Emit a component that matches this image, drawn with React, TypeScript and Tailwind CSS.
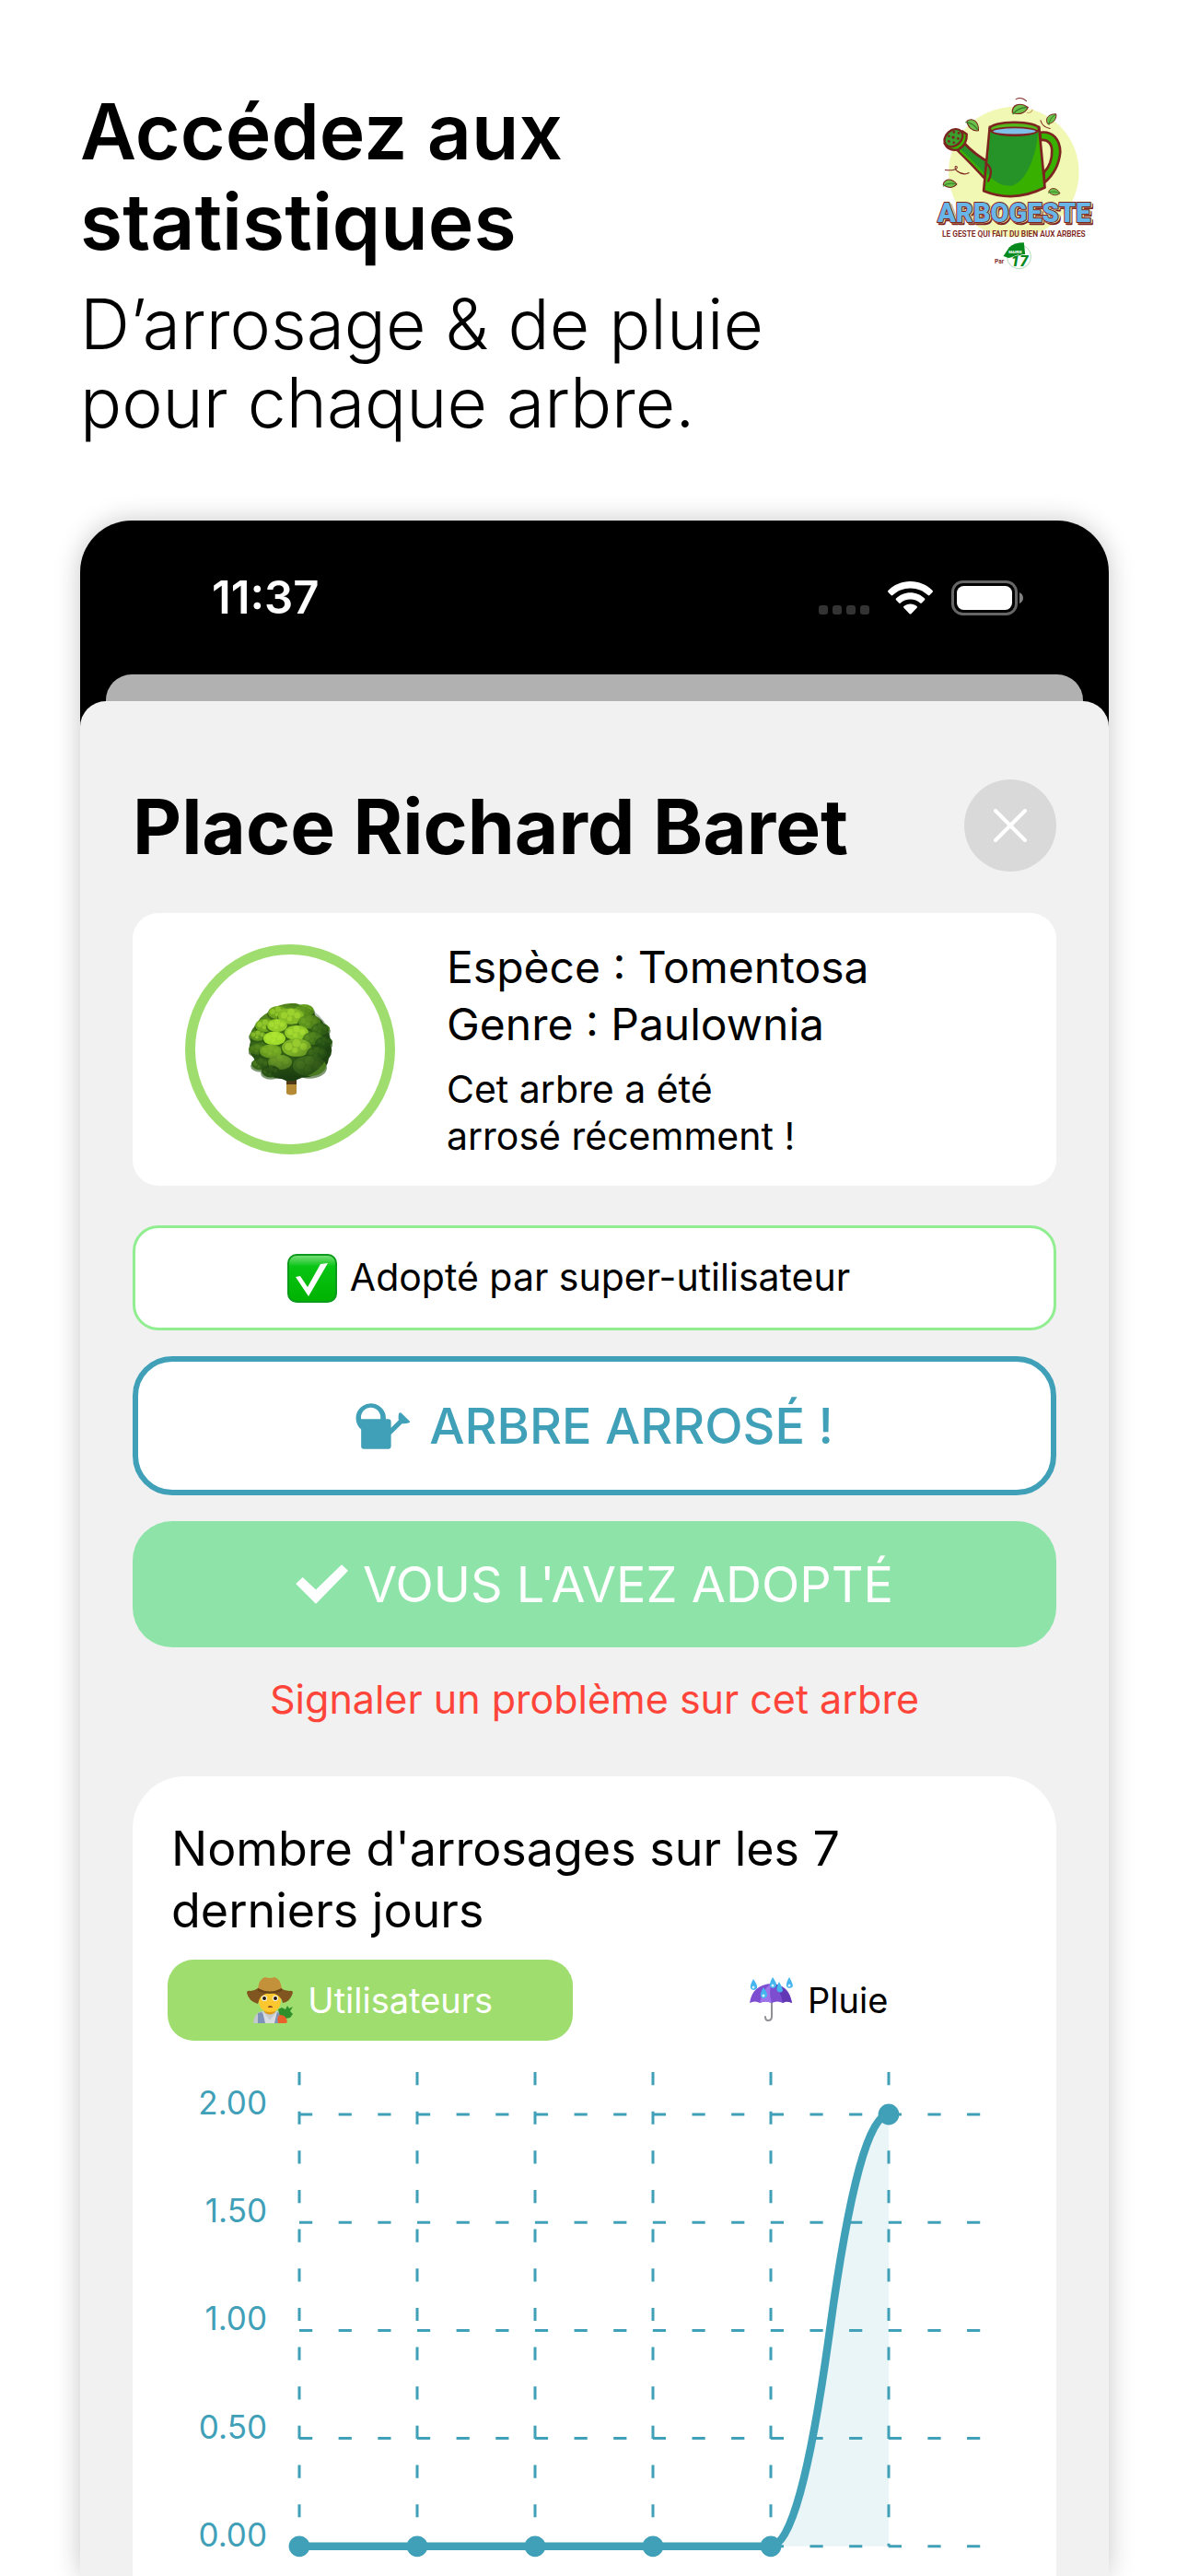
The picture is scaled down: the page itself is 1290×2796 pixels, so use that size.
import { useState } from "react";
import type { ReactNode } from "react";

const yLabels = ["2.00", "1.50", "1.00", "0.50", "0.00"];
const waterings = [0, 0, 0, 0, 0, 2];

const LEAVES = [
  { x: 382, y: 104, r: -8, s: 1.15 },
  { x: 484, y: 136, r: -40, s: 0.9 },
  { x: 232, y: 157, r: 50, s: 1.05 },
  { x: 155, y: 347, r: 8, s: 0.95 },
  { x: 495, y: 374, r: 18, s: 0.8 },
];

function Logo() {
  return (
    <svg
      viewBox="100 60 530 575"
      className="mt-[9px] mr-[14px] h-[192px] w-[177px] shrink-0"
      role="img"
      aria-label="Arbogeste"
    >
      <circle cx="363" cy="311" r="212" fill="#f1f8b4" />
      {LEAVES.map((l, i) => (
        <g
          key={i}
          transform={`translate(${l.x} ${l.y}) rotate(${l.r}) scale(${l.s})`}
          stroke="#7d2420"
          strokeWidth="3"
        >
          <path
            d="M-22 8C-20-12 2-20 24 0C12 18-8 18-22 8Z"
            fill="#6cc04a"
          />
          <path d="M-22 14C-10 2 4-2 20 0" fill="none" stroke="#2f7d28" />
        </g>
      ))}
      <g fill="none" stroke="#7d2420" strokeWidth="3" strokeLinecap="round">
        <path d="M370 74Q388 65 404 80" />
        <path d="M406 118Q420 120 424 108" stroke="#c9a860" />
        <path d="M450 143Q456 166 481 169" />
        <path d="M140 304C160 306 184 303 178 293C172 288 168 300 178 307C190 316 206 320 217 313" />
      </g>
      {/* handle */}
      <path
        d="M448 182C492 176 514 208 514 246C510 290 490 322 462 346L461 312C480 292 488 268 487 240C486 218 474 204 450 207Z"
        fill="#37b000"
        stroke="#7d2420"
        strokeWidth="8"
      />
      {/* spout */}
      <path
        d="M178 238L203 218Q236 254 285 281Q296 310 278 342Q224 282 178 238Z"
        fill="#269328"
        stroke="#7d2420"
        strokeWidth="8"
        strokeLinejoin="round"
      />
      <path
        d="M188 240Q232 280 275 328"
        fill="none"
        stroke="#37b000"
        strokeWidth="7"
      />
      {/* body */}
      <path
        d="M285 164L265 372Q364 412 464 361L445 164Z"
        fill="#37b000"
        stroke="#7d2420"
        strokeWidth="8"
        strokeLinejoin="round"
      />
      <path
        d="M288 170L276 316Q310 356 350 356C404 350 440 250 442 170Z"
        fill="#269328"
      />
      <path
        d="M272 282Q300 300 280 340"
        fill="none"
        stroke="#7d2420"
        strokeWidth="7"
        strokeLinecap="round"
      />
      <ellipse
        cx="365"
        cy="170"
        rx="80"
        ry="21"
        fill="#55b81c"
        stroke="#7d2420"
        strokeWidth="8"
      />
      <ellipse
        cx="365"
        cy="178"
        rx="72"
        ry="12"
        fill="#7fc0ea"
        stroke="#7d2420"
        strokeWidth="5"
      />
      {/* rose */}
      <path
        d="M138 218Q150 244 182 238Q212 222 210 188L196 178Z"
        fill="#37b000"
        stroke="#7d2420"
        strokeWidth="7"
      />
      <ellipse
        cx="167"
        cy="200"
        rx="33"
        ry="25"
        transform="rotate(-42 167 200)"
        fill="#3a9f2c"
        stroke="#7d2420"
        strokeWidth="7"
      />
      <g fill="#7d2420">
        <circle cx="166" cy="198" r="5" />
        <circle cx="152" cy="194" r="4" />
        <circle cx="168" cy="181" r="4" />
        <circle cx="184" cy="184" r="4" />
        <circle cx="182" cy="202" r="4" />
        <circle cx="168" cy="215" r="4" />
        <circle cx="152" cy="211" r="4" />
      </g>
      <g fontFamily="Roboto, sans-serif" textAnchor="middle">
        <g fontSize="87" fontWeight="900" strokeLinejoin="round">
          <text x="370" y="478" fill="#7d2420" stroke="#7d2420" strokeWidth="7">
            ARBOGESTE
          </text>
          <text
            x="366"
            y="474"
            fill="#68b5e8"
            stroke="#f1f8b4"
            strokeWidth="8"
            aria-hidden="true"
          >
            ARBOGESTE
          </text>
          <text
            x="364"
            y="472"
            fill="#68b5e8"
            stroke="#7d2420"
            strokeWidth="6"
            paintOrder="stroke"
            aria-hidden="true"
          >
            ARBOGESTE
          </text>
        </g>
        <text
          x="363"
          y="522"
          fontSize="25"
          fontWeight="600"
          fontFamily="'Liberation Sans Narrow', Roboto, sans-serif"
          fill="#7d2420"
        >
          LE GESTE QUI FAIT DU BIEN AUX ARBRES
        </text>
        <text x="316" y="608" fontSize="20" fontWeight="600" fill="#7d2420">
          Par
        </text>
        <circle
          cx="380"
          cy="586"
          r="39"
          fill="#fff"
          stroke="#8cc79a"
          strokeWidth="2"
        />
        <path d="M329 584L348 556Q364 540 396 540L400 578L346 590Z" fill="#078a1d" />
        <text x="368" y="574" fontSize="13" fontWeight="800" fill="#fff">
          MAIRIE
        </text>
        <text
          x="382"
          y="616"
          fontSize="50"
          fontWeight="900"
          fontStyle="italic"
          fill="#078a1d"
          stroke="#fff"
          strokeWidth="3"
          paintOrder="stroke"
        >
          17
        </text>
      </g>
    </svg>
  );
}

function StatusBar() {
  return (
    <div className="flex items-center justify-between pt-14 pr-[93px] pb-14 pl-[143px]">
      <span className="text-[49px] leading-[55px] font-semibold text-white">
        11:37
      </span>
      <div className="flex items-center gap-5">
        <div className="flex gap-[5px] pt-[26px]">
          <i className="size-[10px] rounded-[3px] bg-[#333]" />
          <i className="size-[10px] rounded-[3px] bg-[#333]" />
          <i className="size-[10px] rounded-[3px] bg-[#333]" />
          <i className="size-[10px] rounded-[3px] bg-[#333]" />
        </div>
        <svg viewBox="0 0 49 36" className="h-9 w-[49px]" fill="#fff">
          <path d="M24.500 0C34 0 42.500 3.800 48.600 10C49.100 10.500 49.100 11.200 48.600 11.700L45.400 15C44.900 15.500 44.200 15.500 43.700 15C38.700 10.200 32 7.400 24.500 7.400C17 7.400 10.300 10.200 5.300 15C4.800 15.500 4.100 15.500 3.600 15L.4 11.700C-.1 11.200-.1 10.500.4 10C6.500 3.800 15 0 24.500 0Z" />
          <path d="M24.500 12.300C30.600 12.300 36 14.700 40 18.600C40.500 19.100 40.500 19.800 40 20.300L36.800 23.600C36.300 24.100 35.600 24.100 35.100 23.600C32.300 21.100 28.600 19.600 24.500 19.600C20.400 19.600 16.700 21.100 13.900 23.600C13.400 24.100 12.700 24.100 12.200 23.600L9 20.300C8.500 19.800 8.500 19.100 9 18.600C13 14.700 18.400 12.300 24.500 12.300Z" />
          <path d="M24.500 24.400C27.200 24.400 29.700 25.400 31.600 27.100C32.100 27.600 32.100 28.300 31.600 28.800L25.400 35.200C24.900 35.700 24.100 35.700 23.600 35.200L17.400 28.800C16.900 28.300 16.900 27.600 17.400 27.100C19.300 25.400 21.800 24.400 24.500 24.400Z" />
        </svg>
        <svg viewBox="0 0 78 38" className="h-[38px] w-[78px]">
          <rect
            x="1.500"
            y="1.500"
            width="69"
            height="35"
            rx="11"
            fill="none"
            stroke="#666"
            strokeWidth="3"
          />
          <rect x="6" y="6" width="60" height="26" rx="7.500" fill="#fff" />
          <path d="M74 13Q78 15 78 19T74 25Z" fill="#808080" />
        </svg>
      </div>
    </div>
  );
}

// x, y, radius, colour of each clump of leaves, back to front
const TREE_LUMPS = [
  [32, 10, 12, "#6fa51f"],
  [60, 8, 12, "#5f9a1c"],
  [46, 14, 15, "#86bd26"],
  [18, 24, 12, "#6fa81f"],
  [66, 20, 13, "#5c931d"],
  [78, 28, 11, "#3f741a"],
  [31, 24, 12, "#93cc29"],
  [10, 35, 10, "#5f971e"],
  [52, 32, 14, "#8fc829"],
  [28, 38, 13, "#a0dc2b"],
  [70, 38, 12, "#4c831d"],
  [82, 42, 10, "#2d6018"],
  [9, 50, 10, "#4a7d1b"],
  [24, 52, 13, "#6fa322"],
  [52, 48, 17, "#7db126"],
  [74, 54, 12, "#37691a"],
  [13, 66, 11, "#39671a"],
  [34, 64, 14, "#6a9a27"],
  [66, 68, 19, "#4a7a22"],
  [24, 74, 11, "#2a5415"],
] as const;

function TreeIcon() {
  return (
    <svg viewBox="0 0 91 100" className="h-[100px] w-[91px]">
      <defs>
        <radialGradient id="tree" cx="0.4" cy="0.25" r="0.8">
          <stop offset="0" stopColor="#6ea01f" />
          <stop offset="0.600" stopColor="#35651a" />
          <stop offset="1" stopColor="#17380f" />
        </radialGradient>
        <radialGradient id="shade" cx="0.38" cy="0.35" r="0.65">
          <stop offset="0.500" stopColor="#17380f" stopOpacity="0" />
          <stop offset="1" stopColor="#17380f" stopOpacity="0.600" />
        </radialGradient>
      </defs>
      <path d="M41 78H52V98Q46 101 41 98Z" fill="#b58a35" />
      <path d="M41 78H52V88H41Z" fill="#4d3916" />
      <path
        d="M46 0Q54-1 60 5Q70 7 73 14Q82 18 83 27Q90 35 88 43Q93 52 87 60Q86 70 76 74Q68 82 58 80Q46 88 36 82Q24 82 18 74Q7 70 6 60Q-2 52 2 42Q0 30 8 24Q12 14 21 10Q32 0 46 0Z"
        fill="url(#tree)"
      />
      {TREE_LUMPS.map(([x, y, r, color], i) => (
        <g key={i}>
          <ellipse cx={x} cy={y + 2} rx={r} ry={r * 0.62} fill="#2a5413" opacity="0.6" />
          <ellipse cx={x} cy={y} rx={r - 1} ry={r * 0.58} fill={color} />
          <g fill="#c0f03c" opacity={y < 50 && x < 60 ? 0.4 : 0.13}>
            <circle cx={x - r * 0.5} cy={y - 1} r={r * 0.24} />
            <circle cx={x} cy={y - r * 0.28} r={r * 0.26} />
            <circle cx={x + r * 0.45} cy={y - 1} r={r * 0.22} />
            <circle cx={x - r * 0.1} cy={y + r * 0.18} r={r * 0.18} />
          </g>
        </g>
      ))}
      <ellipse cx="45" cy="42" rx="44" ry="41" fill="url(#shade)" />
    </svg>
  );
}

function CheckBadge() {
  return (
    <svg viewBox="0 0 54 53" className="h-[53px] w-[54px]">
      <defs>
        <linearGradient id="badge" x1="0" y1="0" x2="0" y2="1">
          <stop offset="0" stopColor="#7fe07f" />
          <stop offset="0.250" stopColor="#08c414" />
          <stop offset="1" stopColor="#00b200" />
        </linearGradient>
      </defs>
      <rect
        x="1"
        y="1"
        width="52"
        height="51"
        rx="9"
        fill="url(#badge)"
        stroke="#0a9a1c"
        strokeWidth="2"
      />
      <path d="M9 25L14 24L22 36L36 11L44 10L23 46Z" fill="#fff" />
    </svg>
  );
}

function WateringCanIcon() {
  return (
    <svg viewBox="442 552 180 154" className="h-[51px] w-[60px]" fill="currentColor">
      <path d="M460 641C449 632 443 618 443 603A49 49 0 0 1 541 607H549Q558 607 558 616V636L583 611Q581 598 584 588Q587 584 591 587L618 613Q622 617 617 619Q606 623 594 622L558 658V696Q558 705 549 705H469Q460 705 460 696ZM460 607H523A32 32 0 1 0 460 607Z" />
    </svg>
  );
}

function CheckIcon() {
  return (
    <svg viewBox="235 1075 174 132" className="h-[43px] w-[57px]">
      <path
        d="M258 1121L302 1163L388 1079L406 1096L302 1203L239 1140Z"
        fill="currentColor"
        stroke="currentColor"
        strokeWidth="5"
        strokeLinejoin="round"
      />
    </svg>
  );
}

function FarmerIcon() {
  return (
    <svg viewBox="0 0 50 50" className="size-[50px]">
      <path d="M7 50Q8 38 17 37H33Q42 38 43 50Z" fill="#c3c8cf" />
      <path d="M12 39L16 38L25 46L33 38L36 39V50H12Z" fill="#7d93b8" />
      <path d="M17 37L25 46L33 37L30 50H20Z" fill="#d9dde2" />
      <path d="M19 33H31V38Q25 43 19 38Z" fill="#dd9a18" />
      <path d="M13 18H37V26Q36 38 25 38Q14 38 13 26Z" fill="#fdc82f" />
      <path
        d="M0 17Q0 14 4 15Q8 15 12 12H37Q41 15 46 15Q50 14 50 17Q47 27 39 28Q37 18 25 17Q14 18 12 29Q2 26 0 17Z"
        fill="#805520"
      />
      <path d="M12 12Q14 1 20 0Q25 2 30 0Q36 1 38 12Q25 20 12 12Z" fill="#c2913a" />
      <path d="M12 12Q25 19 38 12L38 15Q25 21 12 15Z" fill="#6b4518" />
      <circle cx="19" cy="23" r="3" fill="#fff" />
      <circle cx="31" cy="23" r="3" fill="#fff" />
      <circle cx="19" cy="23" r="2" fill="#2a1a0c" />
      <circle cx="31" cy="23" r="2" fill="#2a1a0c" />
      <path d="M23 32Q25 30 28 32V33H23Z" fill="#8c4a1c" />
      <path d="M34 35L38 33L42 35L44 31L46 34L50 32L47 37L50 40L47 44L42 45L36 42Z" fill="#2f8f2b" />
      <path d="M34 50Q32 42 36 41Q41 41 43 45Q45 50 42 50Z" fill="#e8622c" />
    </svg>
  );
}

function UmbrellaIcon() {
  return (
    <svg viewBox="0 0 47 50" className="h-[50px] w-[47px]">
      <path
        d="M24 26V43Q24 47 20 47Q17 47 17 43"
        fill="none"
        stroke="#909096"
        strokeWidth="2"
        strokeLinecap="round"
      />
      <path d="M0 28Q3 8 24 7Q43 8 46 28Q40 25 36 28Q30 25 24 28Q17 25 11 28Q6 25 0 28Z" fill="#7d4fd0" />
      <path d="M11 28Q14 12 24 7Q20 16 24 28Q17 25 11 28Z" fill="#9d72ea" />
      <path d="M36 28Q34 14 24 7Q42 9 46 28Q40 25 36 28Z" fill="#6338b4" />
      <g fill="#45b5ef">
        <path d="M4 2Q0 9 1 12Q4 16 8 12Q9 9 4 2Z" />
        <path d="M25 0Q21 7 22 10Q25 14 29 10Q30 7 25 0Z" />
        <path d="M43 0Q39 7 40 10Q43 14 47 10Q47 7 43 0Z" />
        <path d="M32 5Q28 12 30 15Q33 18 36 15Q36 12 32 5Z" />
        <path d="M15 11Q11 18 12 21Q15 25 19 21Q20 18 15 11Z" />
      </g>
      <g fill="#d8f3ff">
        <circle cx="4" cy="11" r="1.500" />
        <circle cx="25" cy="9" r="1.500" />
        <circle cx="43" cy="9" r="1.500" />
        <circle cx="15" cy="20" r="1.500" />
      </g>
    </svg>
  );
}

function Tab({
  active,
  onClick,
  icon,
  children,
}: {
  active: boolean;
  onClick: () => void;
  icon: ReactNode;
  children: ReactNode;
}) {
  return (
    <button
      type="button"
      aria-pressed={active}
      onClick={onClick}
      className={`flex h-[88px] items-center justify-center gap-4 rounded-[28px] text-[38px] ${
        active ? "bg-[#9fdd6f] text-white" : "text-black"
      }`}
    >
      {icon}
      {children}
    </button>
  );
}

function Chart() {
  const left = 181;
  const stepX = 128;
  const top = 80;
  const stepY = 117.2;
  const base = top + 4 * stepY;
  const points = waterings.map((v, i) => ({
    x: left + i * stepX,
    y: base - v * 2 * stepY,
  }));

  // two quadratic segments between each pair of points
  const line = points.slice(1).reduce((d, p, i) => {
    const prev = points[i];
    const midX = (prev.x + p.x) / 2;
    const midY = (prev.y + p.y) / 2;
    return `${d} Q${(midX + prev.x) / 2},${prev.y} ${midX},${midY} Q${(midX + p.x) / 2},${p.y} ${p.x},${p.y}`;
  }, `M${points[0].x},${points[0].y}`);
  const last = points[points.length - 1];

  return (
    <svg
      viewBox="0 0 1003 581"
      className="block w-full text-[#40a0b8]"
      role="img"
      aria-label="Arrosages des 7 derniers jours"
    >
      <path
        d={`${line} L${last.x},${base} L${left},${base}Z`}
        fill="currentColor"
        opacity="0.110"
      />
      <g stroke="currentColor" strokeWidth="3" strokeDasharray="14.200 28.450">
        {yLabels.map((label, i) => (
          <line
            key={label}
            x1={left}
            x2="921"
            y1={top + i * stepY}
            y2={top + i * stepY}
          />
        ))}
        {points.map((p) => (
          <line key={p.x} x1={p.x} x2={p.x} y1="34" y2={base} />
        ))}
      </g>
      <g fontSize="35" fill="currentColor" textAnchor="end">
        {yLabels.map((label, i) => (
          <text key={label} x="146" y={top + i * stepY}>
            {label}
          </text>
        ))}
      </g>
      <path d={line} fill="none" stroke="currentColor" strokeWidth="8.500" />
      {points.map((p) => (
        <circle key={p.x} cx={p.x} cy={p.y} r="11.400" fill="currentColor" />
      ))}
    </svg>
  );
}

export default function App() {
  const [tab, setTab] = useState<"users" | "rain">("users");

  return (
    <div className="flex min-h-screen flex-col overflow-hidden bg-white pt-[94px] pr-[86px] pl-[87px] font-[Inter,sans-serif] text-black">
      <header className="mb-[86px] flex items-start justify-between">
        <div>
          <h1 className="text-[84px] leading-[98px] font-semibold">
            Accédez aux
            <br />
            statistiques
          </h1>
          <p className="mt-[19px] text-[75px] leading-[85px] font-light">
            D’arrosage &amp; de pluie
            <br />
            pour chaque arbre.
          </p>
        </div>
        <Logo />
      </header>

      <main className="flex flex-1 flex-col rounded-t-[56px] bg-black shadow-[0_0_28px_rgba(0,0,0,0.22)]">
        <StatusBar />
        <div className="mx-7 h-[57px] rounded-t-[28px] bg-[#b1b1b1]" />
        <div className="-mt-7 flex flex-1 flex-col rounded-t-[28px] bg-[#f1f1f1] px-[57px] pt-[85px]">
          <div className="mb-[45px] flex items-center justify-between">
            <h2 className="pt-1 text-[82px] leading-[96px] font-bold">
              Place Richard Baret
            </h2>
            <button
              type="button"
              aria-label="Fermer"
              className="flex size-[100px] items-center justify-center rounded-full bg-[#d9d9d9]"
            >
              <svg
                viewBox="0 0 36 36"
                className="size-9"
                stroke="#fff"
                strokeWidth="4"
                strokeLinecap="round"
              >
                <path d="M2 2L34 34M34 2L2 34" />
              </svg>
            </button>
          </div>

          <section className="flex items-center gap-14 rounded-[28px] bg-white px-[57px] py-7">
            <div className="flex size-[228px] shrink-0 items-center justify-center rounded-full border-[11px] border-[#9fdd6f]">
              <TreeIcon />
            </div>
            <div>
              <p className="text-[48px] leading-[62px]">Espèce : Tomentosa</p>
              <p className="text-[48px] leading-[62px]">Genre : Paulownia</p>
              <p className="mt-[14px] text-[41px] leading-[51px]">
                Cet arbre a été
                <br />
                arrosé récemment !
              </p>
            </div>
          </section>

          <p className="mt-[43px] flex h-[114px] items-center justify-center gap-3.5 rounded-[28px] border-3 border-[#90ee90] bg-white pr-14 text-[41px]">
            <CheckBadge />
            Adopté par super-utilisateur
          </p>
          <button
            type="button"
            className="mt-7 flex h-[151px] items-center justify-center gap-5 rounded-[43px] border-6 border-[#40a0b8] bg-white text-[54px] font-medium text-[#40a0b8]"
          >
            <WateringCanIcon />
            ARBRE ARROSÉ !
          </button>
          <button
            type="button"
            className="mt-7 flex h-[137px] items-center justify-center gap-4 rounded-[43px] bg-[#8ee4a8] text-[54px] text-white"
          >
            <CheckIcon />
            VOUS L'AVEZ ADOPTÉ
          </button>
          <a
            href="#signaler"
            className="mt-7 self-center text-[43px] leading-[56px] text-[#ff453a]"
          >
            Signaler un problème sur cet arbre
          </a>

          <section className="mt-14 flex-1 rounded-t-[57px] bg-white pt-[45px]">
            <h3 className="px-[42px] text-[52px] leading-[67px]">
              Nombre d'arrosages sur les 7
              <br />
              derniers jours
            </h3>
            <div className="mt-5 grid grid-cols-2 gap-12 px-[38px]">
              <Tab
                active={tab === "users"}
                onClick={() => setTab("users")}
                icon={<FarmerIcon />}
              >
                Utilisateurs
              </Tab>
              <Tab
                active={tab === "rain"}
                onClick={() => setTab("rain")}
                icon={<UmbrellaIcon />}
              >
                Pluie
              </Tab>
            </div>
            <Chart />
          </section>
        </div>
      </main>
    </div>
  );
}
